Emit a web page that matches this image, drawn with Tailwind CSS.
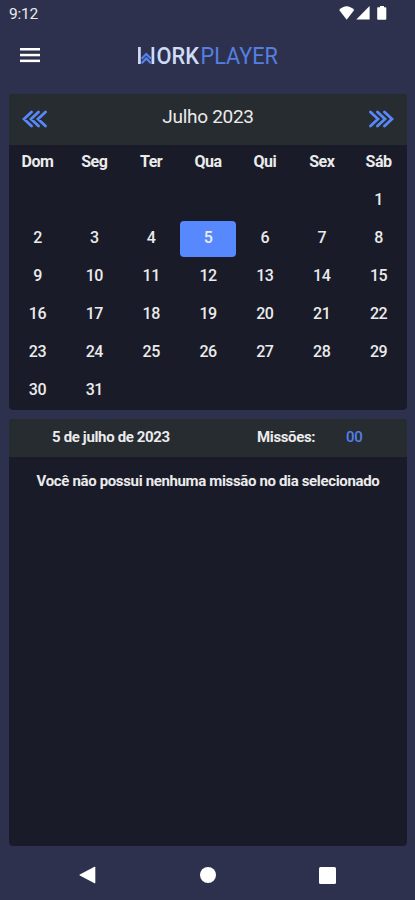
<!DOCTYPE html>
<html lang="pt-BR">
<head>
<meta charset="utf-8">
<title>WorkPlayer</title>
<script src="https://cdn.jsdelivr.net/npm/@tailwindcss/browser@4"></script>
</head>
<body class="bg-[#2e314d] font-[Roboto,sans-serif] text-[#ebebec]">
<div class="w-[415px] h-[900px] flex flex-col overflow-hidden">
  <div class="h-7 flex items-center justify-between pl-[9px] pr-[27px] shrink-0">
    <span class="text-[15.5px] leading-7 tracking-[-0.2px]">9:12</span>
    <svg width="50" height="28" viewBox="0 0 50 28" fill="#fff"><path d="M1.200 10Q8.500 2.500 16.200 10L8.700 19.700Z"/><path d="M31.600 6V19.600H18.300Z"/><path d="M40 7.300h2V6h4v1.300h1.500q.8 0 .8.800v10.800q0 .8-.8.800h-7.500q-.8 0-.8-.8V8.100q0-.8.800-.8Z"/></svg>
  </div>
  <header class="h-[66px] flex items-start pl-5 pt-[15px] shrink-0">
    <svg class="mt-[5px]" width="20" height="16" viewBox="0 0 20 16" fill="#fff"><rect y="0" width="20" height="2.500"/><rect y="5.800" width="20" height="2.500"/><rect y="11.600" width="20" height="2.500"/></svg>
    <svg class="ml-[94px] overflow-visible" width="150" height="28" viewBox="134 43 150 28">
      <path d="M139.400 47V64M152.900 47V64" stroke="#cfdcf8" stroke-width="2.700"/>
      <path d="M141.600 58.800l4.700-4.800 4.700 4.800M141.600 63.200l4.700-4.800 4.700 4.800" fill="none" stroke="#5482ed" stroke-width="2.200"/>
      <text x="156.500" y="63.900" font-size="23.500" font-weight="500" fill="#cfdcf8" textLength="42.500" lengthAdjust="spacingAndGlyphs">ORK</text>
      <text x="200.500" y="63.900" font-size="23.500" font-weight="400" fill="#557fe0" textLength="77.500" lengthAdjust="spacingAndGlyphs">PLAYER</text>
    </svg>
  </header>
  <main class="px-[9px] pr-2 flex flex-col gap-[9px]">
    <section class="h-[316px] rounded bg-[#1a1b28] overflow-hidden">
      <div class="h-[51px] bg-[#272c31] flex items-center justify-between px-[13px]">
        <svg class="-mt-0.5" width="25" height="18" viewBox="0 0 25 18" fill="none" stroke="#5888f8" stroke-width="2.800" stroke-linecap="round"><path d="M9.500 2L2 9l7.500 7M16.500 2L9 9l7.500 7M23.500 2L16 9l7.500 7"/></svg>
        <h1 class="text-[19px] leading-6 tracking-[-0.3px] -mt-[5px]">Julho 2023</h1>
        <svg class="-mt-0.5" width="25" height="18" viewBox="0 0 25 18" fill="none" stroke="#5888f8" stroke-width="2.800" stroke-linecap="round"><path d="M1.500 2L9 9l-7.500 7M8.500 2L16 9l-7.500 7M15.500 2L23 9l-7.500 7"/></svg>
      </div>
      <div class="grid grid-cols-7 auto-rows-[38px] text-center text-base leading-[33px] tracking-[-0.5px] font-medium">
        <b>Dom</b><b>Seg</b><b>Ter</b><b>Qua</b><b>Qui</b><b>Sex</b><b>Sáb</b>
        <span class="col-start-7">1</span>
        <span>2</span><span>3</span><span>4</span><span class="bg-[#5788fe] rounded h-9 w-14 mx-auto">5</span><span>6</span><span>7</span><span>8</span>
        <span>9</span><span>10</span><span>11</span><span>12</span><span>13</span><span>14</span><span>15</span>
        <span>16</span><span>17</span><span>18</span><span>19</span><span>20</span><span>21</span><span>22</span>
        <span>23</span><span>24</span><span>25</span><span>26</span><span>27</span><span>28</span><span>29</span>
        <span>30</span><span>31</span>
      </div>
    </section>
    <section class="h-[427px] rounded bg-[#1a1b28] overflow-hidden">
      <div class="h-[38px] bg-[#272c31] flex text-[15px] leading-9 font-bold tracking-[-0.35px] pl-[43px]">
        <span class="w-[205px]">5 de julho de 2023</span><span class="w-[89px]">Missões:</span><span class="font-medium text-[#5480e8]">00</span>
      </div>
      <p class="text-center text-[15px] leading-6 font-bold tracking-[-0.35px] pt-3 whitespace-nowrap">Você não possui nenhuma missão no dia selecionado</p>
    </section>
  </main>
  <nav class="h-[54px] flex items-center justify-between pl-[79px] pr-[79px] pt-1 shrink-0">
    <svg width="17" height="18" viewBox="0 0 17 18" fill="#fff"><path d="M15.500 .8q.8-.4.800.5v15.400q0 .9-.8.500L.8 9.500q-.8-.5 0-1Z"/></svg>
    <svg width="16" height="16" viewBox="0 0 16 16" fill="#fff"><circle cx="8" cy="8" r="8"/></svg>
    <svg width="17" height="17" viewBox="0 0 17 17" fill="#fff"><rect width="17" height="17" rx="1.500"/></svg>
  </nav>
</div>
</body>
</html>
